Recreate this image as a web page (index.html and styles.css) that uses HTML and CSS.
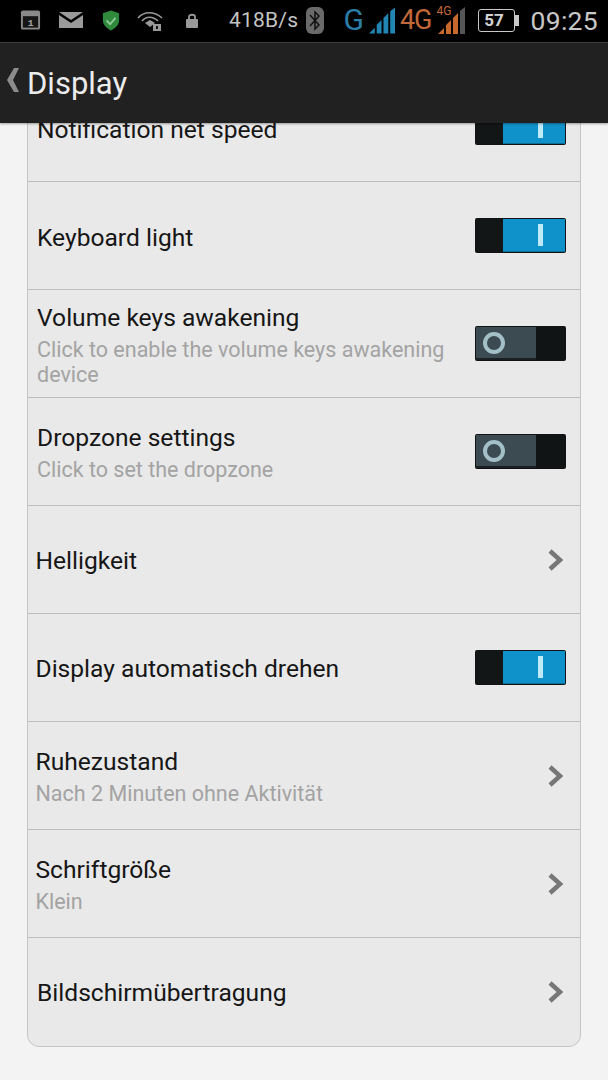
FILE: index.html
```html
<!DOCTYPE html>
<html lang="en">
<head>
<meta charset="utf-8">
<title>Display</title>
<link rel="stylesheet" href="styles.css">
</head>
<body>
<div class="screen">
  <div class="statusbar">
    <div class="status-left">
      <svg class="ic" width="21" height="22" viewBox="0 0 22 22"><rect x="1" y="1" width="20" height="20" rx="2" fill="#8a8a8a"/><rect x="3" y="7" width="16" height="12" fill="#161616"/><text x="11" y="17.5" class="cal">1</text></svg>
      <svg class="ic" width="24" height="16" viewBox="0 0 24 16"><path d="M0 0H24L12 8Z" fill="#9a9a9a"/><path d="M0 3L12 11L24 3V16H0Z" fill="#9a9a9a"/></svg>
      <svg class="ic shield" width="18" height="21" viewBox="0 0 20 22"><path d="M10 0L19 3V11C19 16 14 20 10 22C6 20 1 16 1 11V3Z" fill="#2f8a3c"/><path d="M5 11L9 15L15 8" stroke="#8fc99a" stroke-width="2" fill="none"/></svg>
      <svg class="ic" width="26" height="22" viewBox="0 0 26 22"><g fill="none" stroke="#999" stroke-width="1.6"><path d="M1 9C7 2 17 2 25 9"/><path d="M5 12C9 7 16 7 21 12"/></g><path d="M8 14L13 11L18 14L13 18Z" fill="#999"/><rect x="16" y="15" width="8" height="7" fill="#999"/><rect x="19" y="17" width="2" height="3" fill="#111"/></svg>
      <svg class="ic lock" width="12" height="15" viewBox="0 0 12 15"><rect x="0" y="6" width="12" height="9" rx="1" fill="#999"/><path d="M3 6V4C3 1 9 1 9 4V6" fill="none" stroke="#999" stroke-width="1.8"/></svg>
      <span class="speed">418B/s</span>
    </div>
    <div class="status-right">
      <svg class="bt" width="18" height="27" viewBox="0 0 18 27"><rect width="18" height="27" rx="6" fill="#6a6a6a"/><path d="M4 8L13 18L9 22V5L13 9L4 19" fill="none" stroke="#111" stroke-width="1.5"/></svg>
      <span class="net-g">G</span>
      <svg class="sig" width="27" height="27" viewBox="0 0 28 27"><path d="M0 27L6 21V27ZM8 27V18L13 13V27ZM15 27V11L20 6V27ZM22 27V4L27 0V27Z" fill="#2186b4"/></svg>
      <span class="net-4g">4G</span>
      <span class="sig-wrap">
        <span class="net-4g-small">4G</span>
        <svg width="28" height="27" viewBox="0 0 28 27"><path d="M0 27L6 21V27ZM8 27V18L13 13V27ZM15 27V11L20 6V27Z" fill="#c8682c"/><path d="M22 27V4L27 0V27Z" fill="#555"/></svg>
      </span>
      <span class="battery"><span class="batt-num">57</span></span><span class="batt-tip"></span>
      <span class="clock">09:25</span>
    </div>
  </div>
  <header class="appbar">
    <svg class="back" width="13" height="24" viewBox="0 0 13 24"><path d="M12 0H7L0 12L7 24H12L6 12Z" fill="#8c8c8c"/></svg>
    <span class="appbar-title">Display</span>
  </header>
  <main class="content">
    <section class="card">
      <div class="row row-a"><div class="text text-low"><div class="title">Notification net speed</div></div><div class="switch on"><span class="track"></span><span class="thumb"><i></i></span></div></div>
      <div class="row row-a"><div class="text text-low"><div class="title">Keyboard light</div></div><div class="switch on"><span class="track"></span><span class="thumb"><i></i></span></div></div>
      <div class="row row-a"><div class="text text-lower"><div class="title">Volume keys awakening</div><div class="sub">Click to enable the volume keys awakening device</div></div><div class="switch off"><span class="thumb"><i></i></span><span class="track"></span></div></div>
      <div class="row row-a"><div class="text"><div class="title">Dropzone settings</div><div class="sub">Click to set the dropzone</div></div><div class="switch off"><span class="thumb"><i></i></span><span class="track"></span></div></div>
      <div class="row"><div class="text"><div class="title">Helligkeit</div></div><svg class="chev" width="16" height="22" viewBox="0 0 16 22"><path d="M2 2L12 11L2 20" fill="none" stroke="#777" stroke-width="4.5"/></svg></div>
      <div class="row"><div class="text"><div class="title">Display automatisch drehen</div></div><div class="switch on"><span class="track"></span><span class="thumb"><i></i></span></div></div>
      <div class="row"><div class="text"><div class="title">Ruhezustand</div><div class="sub">Nach 2 Minuten ohne Aktivität</div></div><svg class="chev" width="16" height="22" viewBox="0 0 16 22"><path d="M2 2L12 11L2 20" fill="none" stroke="#777" stroke-width="4.5"/></svg></div>
      <div class="row"><div class="text"><div class="title">Schriftgröße</div><div class="sub">Klein</div></div><svg class="chev" width="16" height="22" viewBox="0 0 16 22"><path d="M2 2L12 11L2 20" fill="none" stroke="#777" stroke-width="4.5"/></svg></div>
      <div class="row row-a"><div class="text"><div class="title">Bildschirmübertragung</div></div><svg class="chev" width="16" height="22" viewBox="0 0 16 22"><path d="M2 2L12 11L2 20" fill="none" stroke="#777" stroke-width="4.5"/></svg></div>
    </section>
  </main>
</div>
</body>
</html>
```
FILE: styles.css
```css
* { box-sizing: border-box; }
html, body { margin: 0; padding: 0; }
body { width: 608px; height: 1080px; overflow: hidden; background: #f3f3f3; font-family: Roboto, "Liberation Sans", sans-serif; }
.screen { width: 608px; height: 1080px; display: flex; flex-direction: column; overflow: hidden; }

.statusbar { height: 43px; flex: none; background: #000; border-bottom: 1px solid #3e3e3e; display: flex; justify-content: space-between; align-items: center; padding: 0 10px 2px 20px; position: relative; z-index: 2; }
.status-left { display: flex; align-items: center; gap: 18px; }
.status-right { display: flex; align-items: center; }
.ic { display: block; flex: none; }
.shield { margin-left: 1px; margin-right: -1px; }
.cal { font: bold 10px "Liberation Mono", monospace; fill: #aaa; text-anchor: middle; }
.lock { margin-left: 5px; margin-right: 14px; }
.speed { color: #c4c4c4; font-size: 21px; letter-spacing: .2px; margin-left: -1px; }
.bt { margin-right: 19px; }
.net-g { color: #2a7ea8; font-size: 30px; line-height: 30px; margin-right: 5px; }
.sig { margin-right: 4px; }
.net-4g { color: #c2683a; font-size: 27px; line-height: 30px; letter-spacing: -1px; }
.sig-wrap { position: relative; display: flex; margin-left: 6px; margin-right: 12px; }
.net-4g-small { position: absolute; left: -1px; top: -3px; color: #c2683a; font-size: 12px; line-height: 14px; }
.battery { width: 37px; height: 23px; border: 1.5px solid #c8c8c8; border-radius: 3px; display: flex; align-items: center; justify-content: center; }
.batt-num { color: #d4d4d4; font-size: 17px; font-weight: 700; line-height: 1; margin-right: 4px; }
.batt-tip { width: 4px; height: 11px; background: #c8c8c8; margin-right: 12px; }
.clock { color: #c8c8c8; font-size: 26.5px; letter-spacing: .3px; }

.appbar { height: 80px; flex: none; background: #212121; display: flex; align-items: center; gap: 7px; padding: 0 0 2px 7px; position: relative; z-index: 2; box-shadow: 0 1px 2px rgba(0,0,0,.35); }
.back { margin-top: -4px; }
.appbar-title { color: #ececec; font-size: 31px; line-height: 36px; padding-top: 4px; }

.content { flex: 1; min-height: 0; padding: 0 27px; overflow: hidden; }
.card { margin-top: -50px; background: #e9e9e9; border: 1px solid #c6c6c6; border-radius: 0 0 12px 12px; }
.row { height: 108px; display: flex; align-items: center; justify-content: space-between; padding: 0 14px 0 7.5px; border-bottom: 1.5px solid #bdbdbd; }
.row:last-child { border-bottom: 0; }
.row-a { padding-left: 9px; }
.text { width: 420px; padding-top: 2px; }
.text-low { padding-top: 4px; }
.text-lower { padding-top: 3px; }
.title { color: #161616; font-size: 24.6px; line-height: 30px; }
.sub { color: #a3a3a3; font-size: 21.5px; line-height: 25px; margin-top: 4px; }

.switch { width: 91px; height: 35px; flex: none; display: flex; background: #111414; border-radius: 2px; padding: 1px; overflow: hidden; }
.switch.on .track { width: 27px; background: #121616; }
.switch.on .thumb { flex: 1; background: #0f92c9; display: flex; align-items: center; justify-content: center; padding-left: 13px; border-bottom: 1px solid #0c6d96; }
.switch.on .thumb i { display: block; width: 5px; height: 22px; background: #bfe9f7; }
.switch.off .thumb { width: 60px; background: #3c4a51; display: flex; align-items: center; padding-left: 7px; border-bottom: 2px solid #1a2023; }
.switch.off .thumb i { display: block; width: 22px; height: 22px; border: 4px solid #a3c0c8; border-radius: 50%; }
.switch.off .track { flex: 1; background: #111414; }
.chev { flex: none; margin-right: 2px; }
```
